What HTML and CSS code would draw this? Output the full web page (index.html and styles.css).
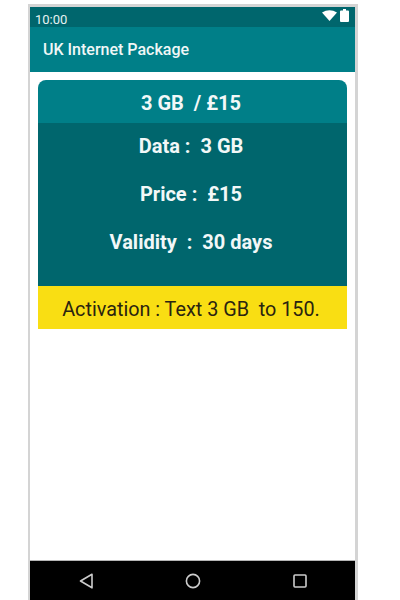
FILE: index.html
```html
<!DOCTYPE html>
<html lang="en">

<head>
    <meta charset="UTF-8">
    <meta name="viewport" content="width=device-width, initial-scale=1.0">
    <title>UK Internet Package</title>
    <link rel="stylesheet" href="styles.css">
</head>

<body>
    <div class="phone">
        <div class="status_bar">
            <span class="time">10:00</span>
            <div class="status_icons">
                <svg width="15" height="11" viewBox="0 0 15 11">
                    <path d="M0 2.5 Q7.5 -2 15 2.5 L7.5 11 Z" fill="#fff" />
                </svg>
                <svg width="9" height="13" viewBox="0 0 9 13">
                    <path d="M3 0 H6 V1.5 H8 Q9 1.5 9 2.5 V12 Q9 13 8 13 H1 Q0 13 0 12 V2.5 Q0 1.5 1 1.5 H3 Z" fill="#fff" />
                </svg>
            </div>
        </div>
        <div class="app_bar">UK Internet Package</div>
        <div class="content">
            <div class="card">
                <div class="card_title">3 GB&nbsp; / £15</div>
                <div class="card_body">
                    <div class="row">Data :&nbsp; 3 GB</div>
                    <div class="row">Price :&nbsp; £15</div>
                    <div class="row">Validity&nbsp; :&nbsp; 30 days</div>
                </div>
                <div class="activation">Activation : Text 3 GB&nbsp; to 150.</div>
            </div>
        </div>
        <div class="nav_bar">
            <svg width="16" height="16" viewBox="0 0 16 16">
                <path d="M14 1.2 L2.5 8 L14 14.8 Z" fill="none" stroke="#ccc" stroke-width="1.6" stroke-linejoin="round" />
            </svg>
            <svg width="16" height="16" viewBox="0 0 16 16">
                <circle cx="8" cy="8" r="6.6" fill="none" stroke="#ccc" stroke-width="1.6" />
            </svg>
            <svg width="16" height="16" viewBox="0 0 16 16">
                <rect x="2" y="2" width="12" height="12" rx="1" fill="none" stroke="#ccc" stroke-width="1.6" />
            </svg>
        </div>
    </div>
</body>

</html>
```

FILE: styles.css
```css
html,
body {
    height: 100%;
}

body {
    margin: 0;
    padding: 4px 42px 0 28px;
    box-sizing: border-box;
    background: #fff;
    font-family: Roboto, "Liberation Sans", sans-serif;
    overflow: hidden;
}

.phone {
    height: 100%;
    box-sizing: border-box;
    display: flex;
    flex-direction: column;
    border: 2px solid #d4d4d4;
    border-width: 3px 3px 0 2px;
    background: #fff;
}

.status_bar {
    height: 20px;
    flex: none;
    display: flex;
    align-items: center;
    justify-content: space-between;
    padding: 0 6px 0 5px;
    background: #00666d;
    color: #e6f2f2;
    font-size: 13px;
}

.time {
    margin-top: 5px;
}

.status_icons {
    display: flex;
    align-items: center;
    gap: 3px;
    margin-top: -3px;
}

.app_bar {
    height: 45px;
    flex: none;
    display: flex;
    align-items: center;
    padding-left: 13px;
    box-sizing: border-box;
    background: #007f88;
    color: #f0f7f7;
    font-size: 16px;
    font-weight: 500;
}

.content {
    flex: 1;
    padding: 8px 8px 0;
}

.card {
    border-radius: 8px 8px 0 0;
    overflow: hidden;
    text-align: center;
    font-size: 20px;
    font-weight: 700;
    color: #f2f8f8;
}

.card_title {
    height: 43px;
    line-height: 47px;
    padding-right: 3px;
    background: #007f88;
}

.card_body {
    height: 163px;
    box-sizing: border-box;
    padding: 11px 3px 0 0;
    background: #00666d;
}

.row {
    height: 48px;
    line-height: 24px;
}

.activation {
    height: 43px;
    line-height: 47px;
    padding-right: 3px;
    background: #f9de13;
    color: #2a2410;
    font-size: 19.8px;
    font-weight: 400;
}

.nav_bar {
    height: 40px;
    flex: none;
    box-sizing: border-box;
    border-top: 1px solid #b5b5b5;
    display: flex;
    align-items: center;
    justify-content: center;
    gap: 91px;
    background: #000;
}
```
